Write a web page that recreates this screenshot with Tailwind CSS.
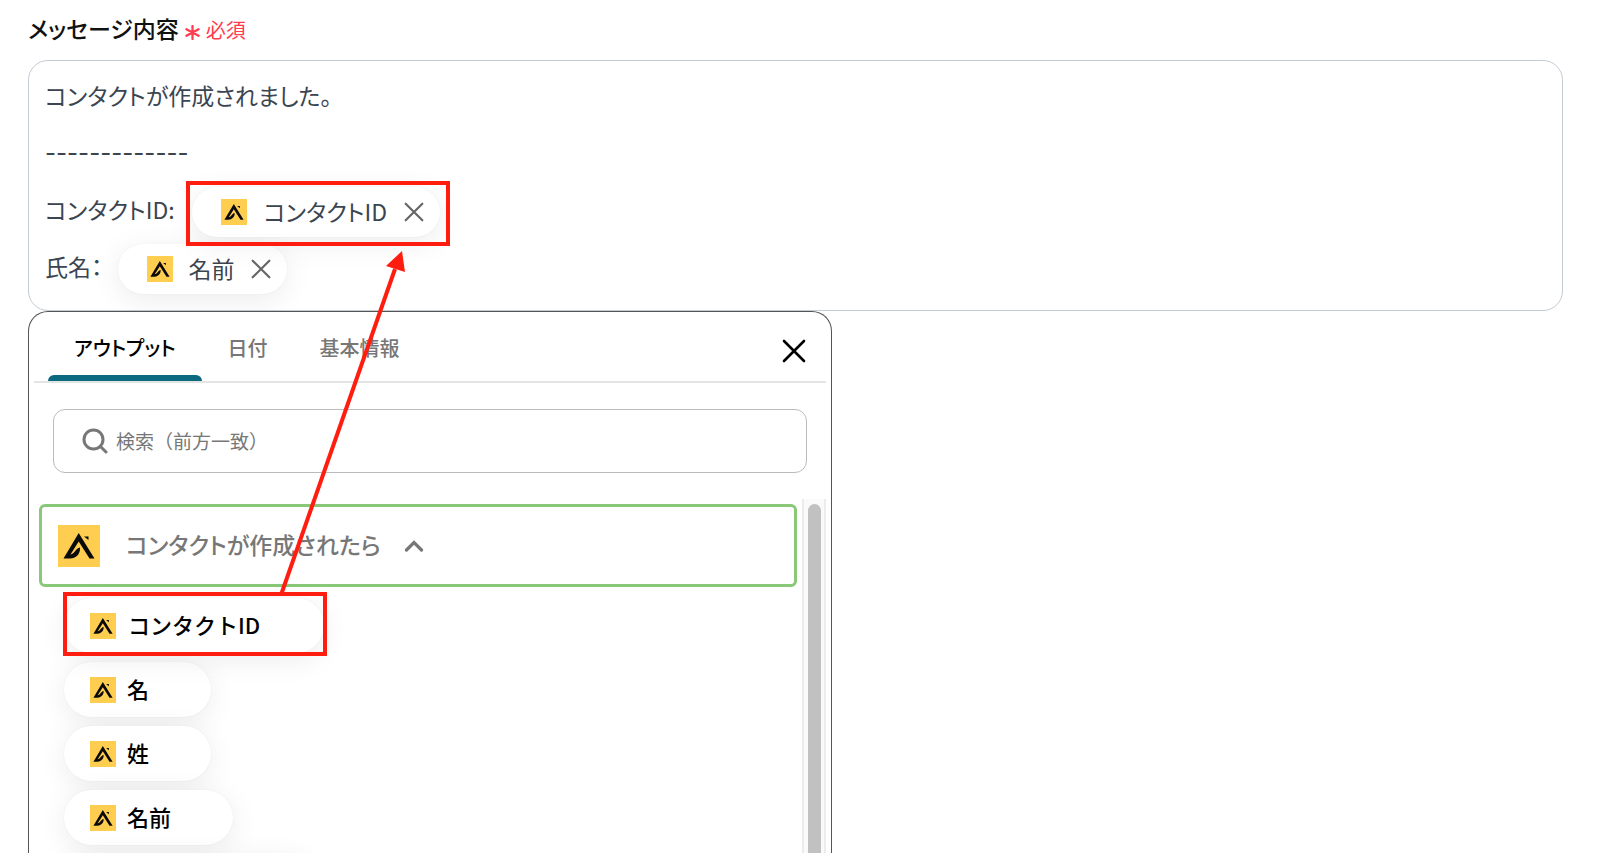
<!DOCTYPE html>
<html lang="ja">
<head>
    <meta charset="UTF-8">
    <meta name="viewport" content="width=device-width, initial-scale=1.0">
    <title>メッセージ内容</title>
    <script src="https://cdn.jsdelivr.net/npm/@tailwindcss/browser@4"></script>
</head>
<body class="bg-white">
    <!-- Shared symbols -->
    <svg class="hidden" aria-hidden="true">
        <symbol id="logo" viewBox="0 0 42 42">
            <rect width="42" height="42" fill="#ffcd50"/>
            <path d="M5.500 33.500 20.700 8 36.500 33.500H31.500L20.700 16.500 12.500 29.500C17 29 17 23.500 22 22.500V24C22 29 18 33.500 12 33.500Z" fill="#0a0a0a"/>
            <path d="M26 11.500h4.500v3.500z" fill="#0a0a0a"/>
        </symbol>
        <symbol id="cross" viewBox="0 0 24 24">
            <path d="M2 2 22 22M22 2 2 22" fill="none" stroke="currentColor" stroke-width="2.600" stroke-linecap="round"/>
        </symbol>
    </svg>

    <div class="relative flex h-screen flex-col overflow-hidden pl-7 pr-[37px] pt-3 text-[23px] font-['Noto_Sans_CJK_JP',sans-serif] [font-feature-settings:'palt']">
        <div class="flex h-12 items-start gap-[6px]">
            <h2 id="message-label" class="text-[23px] leading-8 font-medium text-[#111]">メッセージ内容</h2>
            <span class="flex items-center gap-[6px] text-[20px] leading-9 text-[#ff3b50]">
                <svg class="mt-1 size-[15px]" viewBox="0 0 16 16" fill="none" stroke="currentColor" stroke-width="2.400" stroke-linecap="round"><path d="M8 1v14M1.500 4.500l13 7M14.500 4.500l-13 7"/></svg>
                必須
            </span>
        </div>

        <!-- Message editor -->
        <div role="textbox" aria-multiline="true" aria-labelledby="message-label" contenteditable="true" class="shrink-0 rounded-[20px] border border-[#c3cbd3] px-4 pt-[6px] pb-[15px] text-[#3a4550]">
            <p class="flex h-[57px] items-center">コンタクトが作成されました。</p>
            <p class="flex h-[57px] items-center text-[24px] font-['Inter','Noto_Sans_CJK_JP',sans-serif]">-------------</p>
            <div class="flex h-[57px] items-center gap-[17px]">
                <span>コンタクトID:</span>
                <span class="relative mt-1 flex h-[50px] items-center gap-[17px] rounded-full bg-white pr-4 pl-[29px] shadow-[0_6px_30px_rgba(0,0,0,0.08),0_0_2px_rgba(0,0,0,0.06)]">
                    <svg class="size-[26px]"><use href="#logo"/></svg>
                    <span>コンタクトID</span>
                    <button type="button" aria-label="削除" class="text-[#666]"><svg class="block size-[20px]"><use href="#cross"/></svg></button>
                    <span class="absolute -top-[6px] -right-[10px] -bottom-[9px] -left-[6px] border-4 border-[#ff1d10]"></span>
                </span>
            </div>
            <div class="flex h-[57px] items-center gap-[15px]">
                <span>氏名：</span>
                <span class="mt-1 flex h-[50px] items-center gap-4 rounded-full bg-white pr-4 pl-[29px] shadow-[0_6px_30px_rgba(0,0,0,0.08),0_0_2px_rgba(0,0,0,0.06)]">
                    <svg class="size-[26px]"><use href="#logo"/></svg>
                    <span>名前</span>
                    <button type="button" aria-label="削除" class="text-[#666]"><svg class="block size-[20px]"><use href="#cross"/></svg></button>
                </span>
            </div>
        </div>

        <!-- Output picker -->
        <section class="flex min-h-0 w-full max-w-[804px] flex-1 flex-col rounded-t-[20px] border border-b-0 border-[#555] bg-white px-[5px]">
            <div class="flex h-[71px] shrink-0 items-center justify-between border-b-2 border-[#e4e4e4] pr-[20px] pl-[14px]">
                <div role="tablist" class="flex h-full text-[20px] font-medium text-[#777]">
                    <button type="button" role="tab" aria-selected="true" class="relative px-[26px] pt-[2px] text-black">アウトプット<span class="absolute inset-x-0 bottom-0 h-[6px] rounded-t-[6px] bg-[#0b6a80]"></span></button>
                    <button type="button" role="tab" class="px-[26px] pt-[2px]">日付</button>
                    <button type="button" role="tab" class="px-[26px] pt-[2px]">基本情報</button>
                </div>
                <button type="button" aria-label="閉じる" class="mt-2 text-black"><svg class="block size-6"><use href="#cross"/></svg></button>
            </div>

            <label class="mx-[19px] mt-[26px] flex h-16 shrink-0 items-center gap-2 rounded-[12px] border border-[#bbb] px-7 text-[#777]">
                <svg class="size-[26px]" viewBox="0 0 26 26" fill="none" stroke="currentColor" stroke-width="3" stroke-linecap="round"><circle cx="11.500" cy="11.500" r="9.500"/><path d="M18.500 18.500 24 24"/></svg>
                <input type="text" aria-label="検索" placeholder="検索（前方一致）" class="min-w-0 flex-1 text-[19px] outline-none [font-feature-settings:normal] placeholder:text-[#777]">
            </label>

            <div class="mt-[26px] flex min-h-0 flex-1 overflow-hidden">
                <div class="min-w-0 flex-1 pt-[5px] pr-[5px] pl-[5px]">
                    <button type="button" aria-expanded="true" class="flex h-[83px] w-full items-center rounded-[6px] border-[3px] border-[#88c878] pl-4 font-medium text-[#777]">
                        <svg class="size-[42px]"><use href="#logo"/></svg>
                        <span class="ml-[26px] pb-[2px]">コンタクトが作成されたら</span>
                        <svg class="ml-[23px] h-[12px] w-[20px]" viewBox="0 0 20 12" fill="none" stroke="currentColor" stroke-width="3.200" stroke-linecap="round"><path d="M2.500 10 10 2.500 17.500 10"/></svg>
                    </button>
                    <ul class="mt-[11px] ml-[25px] flex flex-col items-start gap-[9px] text-[22px] font-medium text-black [font-feature-settings:normal]">
                        <li class="relative">
                            <button type="button" class="flex h-[55px] items-center gap-[12px] rounded-full bg-white pr-16 pl-[26px] shadow-[0_6px_30px_rgba(0,0,0,0.08),0_0_2px_rgba(0,0,0,0.06)]"><svg class="size-[26px]"><use href="#logo"/></svg><span class="pb-[3px]">コンタクトID</span></button>
                            <span class="pointer-events-none absolute -top-[6px] -right-[3px] -bottom-[3px] -left-px border-4 border-[#ff1d10]"></span>
                        </li>
                        <li><button type="button" class="flex h-[55px] items-center gap-[11px] rounded-full bg-white pr-[62px] pl-[26px] shadow-[0_6px_30px_rgba(0,0,0,0.08),0_0_2px_rgba(0,0,0,0.06)]"><svg class="size-[26px]"><use href="#logo"/></svg><span class="pb-[3px]">名</span></button></li>
                        <li><button type="button" class="flex h-[55px] items-center gap-[11px] rounded-full bg-white pr-[62px] pl-[26px] shadow-[0_6px_30px_rgba(0,0,0,0.08),0_0_2px_rgba(0,0,0,0.06)]"><svg class="size-[26px]"><use href="#logo"/></svg><span class="pb-[3px]">姓</span></button></li>
                        <li><button type="button" class="flex h-[55px] items-center gap-[11px] rounded-full bg-white pr-[62px] pl-[26px] shadow-[0_6px_30px_rgba(0,0,0,0.08),0_0_2px_rgba(0,0,0,0.06)]"><svg class="size-[26px]"><use href="#logo"/></svg><span class="pb-[3px]">名前</span></button></li>
                        <li class="h-[55px] w-[250px] rounded-full bg-white shadow-[0_6px_30px_rgba(0,0,0,0.08),0_0_2px_rgba(0,0,0,0.06)]"></li>
                    </ul>
                </div>
                <div class="flex w-6 justify-center border-x-2 border-[#ececec] bg-[#fafafa] pt-[5px]">
                    <div class="w-[13px] rounded-t-full bg-[#c1c1c1]"></div>
                </div>
            </div>
        </section>

        <!-- Arrow from the list item to the inserted chip -->
        <svg class="pointer-events-none absolute top-[250px] left-[270px] h-[350px] w-[140px]" viewBox="0 0 140 350">
            <path d="M11 345 125 19" stroke="#ff1d10" stroke-width="4"/>
            <path d="M132 1 116 16 135 22Z" fill="#ff1d10"/>
        </svg>
    </div>
</body>
</html>
